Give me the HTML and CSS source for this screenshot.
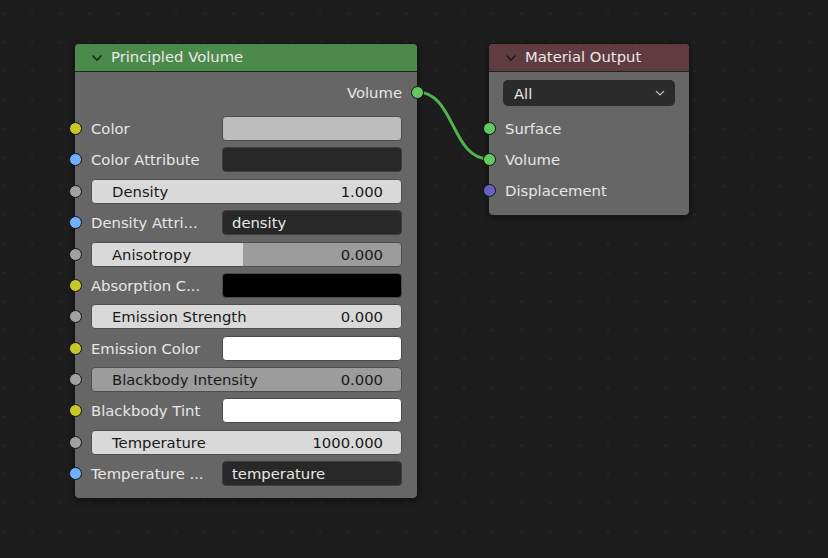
FILE: index.html
```html
<!DOCTYPE html>
<html>
<head>
<meta charset="utf-8">
<link rel="stylesheet" href="styles.css">
</head>
<body>
<div class="canvas">
  <svg class="links" width="828" height="558" viewBox="0 0 828 558">
    <path d="M417,92 C455,92 451,159 489,159" fill="none" stroke="#1a1a1a" stroke-width="5"/>
    <path d="M417,92 C455,92 451,159 489,159" fill="none" stroke="#4fb24f" stroke-width="3"/>
  </svg>

  <div class="node node-volume">
    <div class="header header-green">
      <svg class="chev" width="12" height="8" viewBox="0 0 12 8"><path d="M1.5,1.5 L6,6 L10.5,1.5" fill="none" stroke="#1e1e1e" stroke-width="1.6"/></svg>
      <span>Principled Volume</span>
    </div>
    <div class="body">
      <div class="out-row">
        <span>Volume</span>
        <i class="sock sock-out green"></i>
      </div>
      <div class="row"><i class="sock yellow"></i><span class="lbl">Color</span><div class="fld" style="background:#bdbdbd"></div></div>
      <div class="row"><i class="sock blue"></i><span class="lbl">Color Attribute</span><div class="fld dark"></div></div>
      <div class="row"><i class="sock grey"></i><div class="slider"><span>Density</span><span>1.000</span></div></div>
      <div class="row"><i class="sock blue"></i><span class="lbl">Density Attri...</span><div class="fld dark"><span>density</span></div></div>
      <div class="row"><i class="sock grey"></i><div class="slider mid"><div class="fill" style="width:49%"></div><span>Anisotropy</span><span>0.000</span></div></div>
      <div class="row"><i class="sock yellow"></i><span class="lbl">Absorption C...</span><div class="fld" style="background:#000"></div></div>
      <div class="row"><i class="sock grey"></i><div class="slider"><span>Emission Strength</span><span>0.000</span></div></div>
      <div class="row"><i class="sock yellow"></i><span class="lbl">Emission Color</span><div class="fld" style="background:#fff"></div></div>
      <div class="row"><i class="sock grey"></i><div class="slider mid"><span>Blackbody Intensity</span><span>0.000</span></div></div>
      <div class="row"><i class="sock yellow"></i><span class="lbl">Blackbody Tint</span><div class="fld" style="background:#fff"></div></div>
      <div class="row"><i class="sock grey"></i><div class="slider"><span>Temperature</span><span>1000.000</span></div></div>
      <div class="row"><i class="sock blue"></i><span class="lbl">Temperature ...</span><div class="fld dark"><span>temperature</span></div></div>
    </div>
  </div>

  <div class="node node-output">
    <div class="header header-red">
      <svg class="chev" width="12" height="8" viewBox="0 0 12 8"><path d="M1.5,1.5 L6,6 L10.5,1.5" fill="none" stroke="#1e1e1e" stroke-width="1.6"/></svg>
      <span>Material Output</span>
    </div>
    <div class="body body-out">
      <div class="dropdown"><span>All</span>
        <svg width="10" height="6" viewBox="0 0 10 6"><path d="M1,1 L5,5 L9,1" fill="none" stroke="#bdbdbd" stroke-width="1.2"/></svg>
      </div>
      <div class="row"><i class="sock green"></i><span class="lbl">Surface</span></div>
      <div class="row"><i class="sock green"></i><span class="lbl">Volume</span></div>
      <div class="row"><i class="sock purple"></i><span class="lbl">Displacement</span></div>
    </div>
  </div>
</div>
</body>
</html>
```
FILE: styles.css
```css
* { box-sizing: border-box; }
html, body { margin: 0; padding: 0; }
body {
  width: 828px;
  height: 558px;
  overflow: hidden;
  background-color: #1d1d1d;
  font-family: "DejaVu Sans", sans-serif;
  font-size: 14.8px;
  color: #e6e6e6;
}
.canvas {
  position: relative;
  width: 828px;
  height: 558px;
  background-image: radial-gradient(circle, #262626 1.2px, transparent 1.5px);
  background-size: 28.8px 28.8px;
  background-position: -11px -1px;
}
.links { position: absolute; left: 0; top: 0; z-index: 0; pointer-events: none; }
.node {
  position: absolute;
  z-index: 1;
  background: #666666;
  border: 1px solid #161616;
  border-radius: 5px;
  box-shadow: 0 2px 6px rgba(0,0,0,0.45);
  display: flex;
  flex-direction: column;
}
.node-volume { left: 74px; top: 43px; width: 344px; height: 456px; }
.node-output { left: 488px; top: 43px; width: 202px; height: 173px; }
.header {
  height: 28px;
  border-radius: 4px 4px 0 0;
  border-bottom: 1px solid #222;
  display: flex;
  align-items: center;
  padding-left: 16px;
  gap: 8px;
  color: #e8e8e8;
  flex: none;
}
.header span { line-height: 1; }
.header-green { background: #4c8a4c; }
.header-red { background: #613b42; }
.chev { flex: none; }
.body { position: relative; padding: 8.5px 15px 0 16px; display: flex; flex-direction: column; }
.out-row {
  height: 24px;
  display: flex;
  align-items: center;
  justify-content: flex-end;
  position: relative;
  margin-bottom: 8.25px;
  padding-right: 0;
}
.row {
  height: 31.4px;
  display: flex;
  align-items: center;
  position: relative;
}
.lbl { width: 131px; flex: none; white-space: nowrap; }
.sock {
  position: absolute;
  left: -22px;
  top: 50%;
  width: 13px;
  height: 13px;
  margin-top: -6.5px;
  border-radius: 50%;
  border: 1px solid #111;
  display: block;
}
.sock-out { left: auto; right: -22px; }
.yellow { background: #c7c729; }
.blue { background: #6fb1ff; }
.grey { background: #a1a1a1; }
.green { background: #63c763; }
.purple { background: #6363c7; }
.fld {
  flex: 1;
  height: 25px;
  border-radius: 4px;
  border: 1px solid #4a4a4a;
  display: flex;
  align-items: center;
  padding-left: 9px;
  color: #e6e6e6;
}
.fld.dark { background: #282828; border-color: #3d3d3d; }
.slider {
  flex: 1;
  height: 25px;
  border-radius: 4px;
  background: #d9d9d9;
  border: 1px solid #4e4e4e;
  display: flex;
  align-items: center;
  justify-content: space-between;
  padding: 0 18px 0 20px;
  color: #1a1a1a;
  position: relative;
  overflow: hidden;
}
.slider span { position: relative; }
.slider.mid { background: #9c9c9c; }
.fill { position: absolute; left: 0; top: 0; bottom: 0; background: #d9d9d9; }
.body-out { padding: 8px 14px 0 16px; }
.dropdown {
  height: 26px;
  margin-left: -2px;
  margin-bottom: 6.5px;
  border-radius: 5px;
  background: #2b2b2b;
  display: flex;
  align-items: center;
  justify-content: space-between;
  padding: 0 10px 0 11px;
  color: #e6e6e6;
}
```
